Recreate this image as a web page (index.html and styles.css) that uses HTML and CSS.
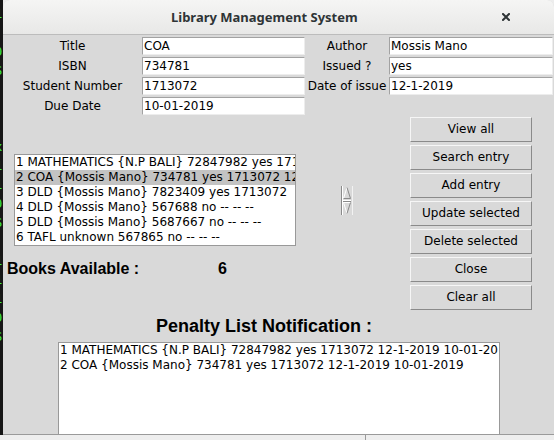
FILE: index.html
```html
<!DOCTYPE html>
<html>
<head>
<meta charset="utf-8">
<title>Library Management System</title>
<link rel="stylesheet" href="styles.css">
</head>
<body>
<div class="screen">
  <div class="term"><pre>
1
.
0
S



x
1
1
0
S

1
1
1
0
S</pre></div>
  <div class="window">
    <div class="titlebar">
      <span class="title">Library Management System</span>
      <svg class="close" width="8" height="8" viewBox="0 0 8 8"><path d="M1 1L7 7M7 1L1 7" stroke="#2e3436" stroke-width="2" stroke-linecap="square"/></svg>
    </div>
    <div class="content">
      <div class="form">
        <div class="label">Title</div><div class="entry">COA</div>
        <div class="label">Author</div><div class="entry">Mossis Mano</div>
        <div class="label">ISBN</div><div class="entry">734781</div>
        <div class="label">Issued ?</div><div class="entry">yes</div>
        <div class="label">Student Number</div><div class="entry">1713072</div>
        <div class="label">Date of issue</div><div class="entry">12-1-2019</div>
        <div class="label">Due Date</div><div class="entry">10-01-2019</div>
      </div>
      <div class="middle">
        <div class="left">
          <div class="listrow">
            <div class="listbox">
              <div class="item">1 MATHEMATICS {N.P BALI} 72847982 yes 1713072 12-1-2019 10-01-2019</div>
              <div class="item selected">2 COA {Mossis Mano} 734781 yes 1713072 12-1-2019 10-01-2019</div>
              <div class="item">3 DLD {Mossis Mano} 7823409 yes 1713072</div>
              <div class="item">4 DLD {Mossis Mano} 567688 no -- -- --</div>
              <div class="item">5 DLD {Mossis Mano} 5687667 no -- -- --</div>
              <div class="item">6 TAFL unknown 567865 no -- -- --</div>
            </div>
            <svg class="scroll" width="12" height="29" viewBox="0 0 12 29">
              <rect x="0" y="0" width="12" height="29" fill="#d9d9d9"/>
              <path d="M0.5 0V29" stroke="#8a8a8a"/>
              <path d="M1.5 0V29" stroke="#ffffff"/>
              <path d="M11.5 0V29" stroke="#f2f2f2"/>
              <path d="M6 1.5L2.5 12.5" stroke="#ffffff"/>
              <path d="M6 1.5L9.5 12.5H2.5" stroke="#8a8a8a" fill="none"/>
              <path d="M2 14.5H10" stroke="#ffffff"/>
              <path d="M2 15.5H10" stroke="#8a8a8a"/>
              <path d="M2.5 16.5H9.5" stroke="#ffffff"/>
              <path d="M2.5 16.5L6 27.5" stroke="#ffffff"/>
              <path d="M9.5 16.5L6 27.5" stroke="#8a8a8a"/>
            </svg>
          </div>
          <div class="avail"><span class="avail-label">Books Available :</span><span class="count">6</span></div>
        </div>
        <div class="buttons">
          <div class="btn">View all</div>
          <div class="btn">Search entry</div>
          <div class="btn">Add entry</div>
          <div class="btn">Update selected</div>
          <div class="btn">Delete selected</div>
          <div class="btn">Close</div>
          <div class="btn">Clear all</div>
        </div>
      </div>
      <div class="penalty-title">Penalty List Notification :</div>
      <div class="penalty">
        <div class="item">1 MATHEMATICS {N.P BALI} 72847982 yes 1713072 12-1-2019 10-01-2019</div>
        <div class="item">2 COA {Mossis Mano} 734781 yes 1713072 12-1-2019 10-01-2019</div>
      </div>
    </div>
  </div>
</div>
<div class="desktop"><div class="desk-sep"></div></div>
</body>
</html>
```
FILE: styles.css
```css
* { box-sizing: border-box; }
html, body { margin: 0; padding: 0; }
body {
  width: 554px;
  height: 440px;
  overflow: hidden;
  background: #ededed;
  font-family: "DejaVu Sans", sans-serif;
  font-size: 12px;
  color: #000;
  display: flex;
  flex-direction: column;
}
.screen {
  display: flex;
  height: 435px;
  flex: none;
}
.term {
  width: 3px;
  flex: none;
  background: #161616;
  overflow: hidden;
}
.term pre {
  margin: 5px 0 0 -5px;
  color: #3ff23f;
  font: 12px/19px "DejaVu Sans Mono", monospace;
}
.window {
  flex: 1;
  display: flex;
  flex-direction: column;
  background: #d9d9d9;
  border-radius: 7px 7px 0 0;
  overflow: hidden;
  border-bottom: 1px solid #9a9a9a;
}
.titlebar {
  height: 35px;
  flex: none;
  display: flex;
  align-items: center;
  background: linear-gradient(#f5f5f4, #e8e8e7);
  border-bottom: 1px solid #bcbcbc;
}
.title {
  margin-left: 168px;
  font: bold 13px "Noto Sans", sans-serif;
  color: #2e3436;
}
.close {
  margin-left: auto;
  margin-right: 44px;
}
.content {
  flex: 1;
  display: flex;
  flex-direction: column;
  min-height: 0;
}
.form {
  display: grid;
  grid-template-columns: 139px 163px 84px 164px;
  grid-auto-rows: 18px;
  row-gap: 2px;
  padding-top: 2px;
}
.label {
  text-align: center;
  line-height: 18px;
  white-space: nowrap;
}
.entry {
  background: #fff;
  border: 1px solid;
  border-color: #a2a2a2 #ededed #ededed #a2a2a2;
  padding-left: 1px;
  line-height: 16px;
  white-space: nowrap;
  overflow: hidden;
}
.middle {
  display: flex;
  height: 195px;
  flex: none;
}
.left {
  width: 407px;
  padding-top: 39px;
}
.listrow {
  display: flex;
  align-items: center;
  margin-left: 11px;
}
.listbox {
  width: 282px;
  height: 92px;
  background: #fff;
  border: 1px solid #999;
  overflow: hidden;
}
.item {
  line-height: 15px;
  padding-left: 1px;
  white-space: nowrap;
}
.selected { background: #c3c3c3; }
.scroll {
  margin-left: 45px;
  flex: none;
}
.avail {
  display: flex;
  margin-top: 13px;
  padding-left: 4px;
  font: bold 16px/20px "Liberation Sans", Arial, sans-serif;
}
.avail-label { width: 211px; }
.buttons {
  width: 122px;
  padding-top: 2px;
  display: flex;
  flex-direction: column;
  gap: 3px;
}
.btn {
  height: 25px;
  border: 1px solid;
  border-color: #f6f6f6 #8a8a8a #8a8a8a #f6f6f6;
  text-align: center;
  line-height: 23px;
  white-space: nowrap;
}
.penalty-title {
  margin-top: 5px;
  padding-left: 153px;
  font: bold 18px/22px "Liberation Sans", Arial, sans-serif;
}
.penalty {
  flex: 1;
  margin: 5px 0 0 55px;
  width: 442px;
  background: #fff;
  border: 1px solid #999;
  border-bottom: none;
  overflow: hidden;
}
.desktop {
  flex: 1;
  background: #eeeeee;
  position: relative;
}
.desk-sep {
  margin-left: 365px;
  width: 1px;
  height: 100%;
  background: #9a9a9a;
}
```
